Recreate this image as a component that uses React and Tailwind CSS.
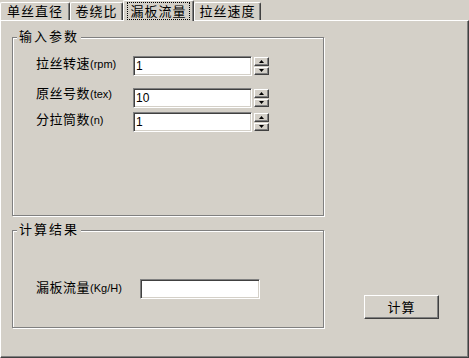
import React from "react";

const raised =
  "border border-t-white border-l-white border-r-[#404040] border-b-[#404040] shadow-[inset_-1px_-1px_0_#808080]";
const sunken =
  "border border-t-[#808080] border-l-[#808080] border-r-white border-b-white shadow-[inset_1px_1px_0_#404040,inset_-1px_-1px_0_#d4d0c8]";

const Tab = ({ label, width, active }) => {
  if (active) {
    return (
      <div
        className={`${width} h-[21px] -mb-px relative z-10 bg-[#d4d0c8] border-t border-l border-r border-t-white border-l-white border-r-[#404040] shadow-[inset_-1px_0_0_#808080] rounded-t-[2px] flex items-start justify-center pt-[1px]`}
      >
        <span className="border border-dotted border-black h-[18px] px-[2px] flex items-center text-[13px] tracking-[1px] leading-none">
          {label}
        </span>
      </div>
    );
  }
  return (
    <div
      className={`${width} h-[18px] border-t border-l border-r border-t-white border-l-white border-r-[#404040] shadow-[inset_-1px_0_0_#808080] rounded-t-[2px] flex items-center justify-center text-[13px] tracking-[1px] leading-none`}
    >
      {label}
    </div>
  );
};

const Arrow = ({ up }) => (
  <svg width="5" height="3" viewBox="0 0 5 3">
    {up ? <path d="M2.5 0 L5 3 L0 3 Z" fill="#000" /> : <path d="M0 0 L5 0 L2.5 3 Z" fill="#000" />}
  </svg>
);

const Spin = () => (
  <div className="w-[15px] h-[20px] ml-[2px] flex flex-col gap-px py-px">
    <div className={`${raised} h-[9px] flex items-center justify-center bg-[#d4d0c8]`}>
      <Arrow up />
    </div>
    <div className={`${raised} h-[9px] flex items-center justify-center bg-[#d4d0c8]`}>
      <Arrow />
    </div>
  </div>
);

const Label = ({ cn, unit, className }) => (
  <div className={`flex items-baseline leading-[16px] ${className || ""}`}>
    <span className="text-[13px] tracking-[0.5px]">{cn}</span>
    <span className="text-[11px] font-['Liberation_Sans',sans-serif]">{unit}</span>
  </div>
);

const Field = ({ value, width }) => (
  <div
    className={`${sunken} ${width} h-[20px] bg-white flex items-center pl-[2px] text-[12px] font-['Liberation_Sans',sans-serif]`}
  >
    {value}
  </div>
);

const Group = ({ title, height, children, className }) => (
  <div
    className={`relative w-[312px] ${height} border border-[#808080] shadow-[inset_1px_1px_0_#fff,1px_1px_0_#fff] ${className || ""}`}
  >
    <span className="absolute left-[4px] top-[-9px] px-[2px] bg-[#d4d0c8] text-[13px] tracking-[2px] leading-[16px]">
      {title}
    </span>
    {children}
  </div>
);

const rows = [
  { cn: "拉丝转速", unit: "(rpm)", value: "1", gap: "mt-[18px]", lab: "" },
  { cn: "原丝号数", unit: "(tex)", value: "10", gap: "mt-[12px]", lab: "-mt-[2px]" },
  { cn: "分拉筒数", unit: "(n)", value: "1", gap: "mt-[4px]", lab: "" },
];

export default function App() {
  return (
    <div className="w-[469px] h-[358px] bg-[#d4d0c8] text-black flex flex-col overflow-hidden font-['Liberation_Sans','Noto_Sans_CJK_SC',sans-serif]">
      <div className="h-[20px] flex items-end">
        <Tab label="单丝直径" width="w-[70px]" />
        <Tab label="卷绕比" width="w-[53px]" />
        <Tab label="漏板流量" width="w-[71px]" active />
        <Tab label="拉丝速度" width="w-[67px]" />
      </div>
      <div className="h-[338px] border-t border-l border-r border-b border-t-white border-l-white border-r-[#404040] border-b-[#404040] shadow-[inset_-1px_-1px_0_#808080] flex pl-[11px] pt-[16px]">
        <div className="flex flex-col">
          <Group title="输入参数" height="h-[179px]">
            {rows.map((r) => (
              <div key={r.cn} className={`flex items-start ${r.gap}`}>
                <div className="w-[120px] pl-[23px]">
                  <Label cn={r.cn} unit={r.unit} className={r.lab} />
                </div>
                <Field value={r.value} width="w-[119px]" />
                <Spin />
              </div>
            ))}
          </Group>
          <Group title="计算结果" height="h-[98px]" className="mt-[14px]">
            <div className="flex items-center mt-[48px] pl-[23px]">
              <div className="w-[104px]">
                <Label cn="漏板流量" unit="(Kg/H)" className="-mt-[3px]" />
              </div>
              <Field value="" width="w-[120px]" />
            </div>
          </Group>
        </div>
        <div className="ml-[40px] mt-[258px]">
          <button
            className={`${raised} w-[75px] h-[24px] bg-[#d4d0c8] flex items-center justify-center text-[13px] tracking-[1px] leading-none`}
          >
            计算
          </button>
        </div>
      </div>
    </div>
  );
}
